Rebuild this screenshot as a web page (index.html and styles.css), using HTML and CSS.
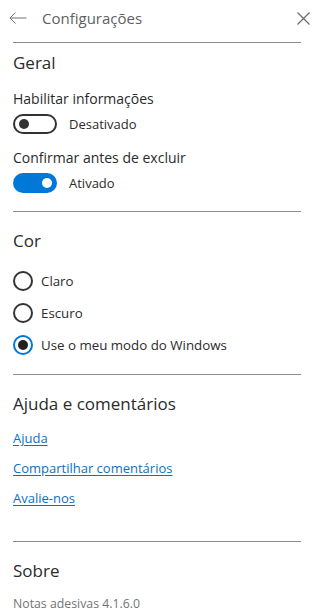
FILE: index.html
```html
<!DOCTYPE html>
<html lang="pt">
<head>
<meta charset="utf-8">
<title>Configurações</title>
<link rel="stylesheet" href="styles.css">
</head>
<body>
<div class="panel">
  <header class="header">
    <svg class="back" width="18" height="12" viewBox="0 0 18 12"><path d="M1 6H17.5M6.5 0.5L1 6l5.5 5.5" fill="none" stroke="#707070" stroke-width="1"/></svg>
    <span class="title">Configurações</span>
    <svg class="close" width="13" height="13" viewBox="0 0 13 13"><path d="M0.5 0.5l12 12M12.5 0.5l-12 12" fill="none" stroke="#6b6b6b" stroke-width="1.2"/></svg>
  </header>

  <section class="section first">
    <h2 class="heading">Geral</h2>
    <div class="label">Habilitar informações</div>
    <div class="toggle-row">
      <span class="toggle off"><span class="knob"></span></span>
      <span class="toggle-text">Desativado</span>
    </div>
    <div class="label second">Confirmar antes de excluir</div>
    <div class="toggle-row">
      <span class="toggle on"><span class="knob"></span></span>
      <span class="toggle-text">Ativado</span>
    </div>
  </section>

  <section class="section radios">
    <h2 class="heading">Cor</h2>
    <div class="radio-row"><span class="radio"></span><span>Claro</span></div>
    <div class="radio-row"><span class="radio"></span><span>Escuro</span></div>
    <div class="radio-row"><span class="radio checked"><span class="dot"></span></span><span>Use o meu modo do Windows</span></div>
  </section>

  <section class="section links">
    <h2 class="heading">Ajuda e comentários</h2>
    <a class="link" href="#">Ajuda</a>
    <a class="link" href="#">Compartilhar comentários</a>
    <a class="link" href="#">Avalie-nos</a>
  </section>

  <section class="section about">
    <h2 class="heading">Sobre</h2>
    <div class="version">Notas adesivas 4.1.6.0</div>
  </section>
</div>
</body>
</html>
```

FILE: styles.css
```css
html, body {
  margin: 0;
  padding: 0;
  background: #ffffff;
}
body {
  font-family: "Open Sans", "Noto Sans", sans-serif;
  font-size: 14px;
  color: #2b2b2b;
  width: 312px;
  height: 611px;
  overflow: hidden;
}
.panel {
  padding: 0 11px 0 13px;
}
.header {
  display: flex;
  align-items: center;
  height: 36px;
  padding-bottom: 6px;
  margin: 0 -9px 0 -4px;
}
.back {
  display: block;
  flex: none;
}
.title {
  margin-left: 15px;
  font-size: 15px;
  color: #5f5f5f;
  flex: 1;
}
.close {
  display: block;
  flex: none;
}
.section {
  border-top: 1px solid #8c8c8c;
  display: flex;
  flex-direction: column;
  align-items: flex-start;
}
.heading {
  margin: 15px 0 0;
  font-size: 17px;
  font-weight: 400;
  line-height: 28px;
  color: #2b2b2b;
}
.first .heading {
  margin-top: 6px;
}
.first {
  padding-bottom: 18px;
}
.label {
  line-height: 20px;
  margin-top: 12px;
}
.label.second {
  margin-top: 14px;
}
.toggle-row {
  display: flex;
  align-items: center;
  margin-top: 5px;
  height: 20px;
  font-size: 13px;
}
.toggle {
  box-sizing: border-box;
  width: 44px;
  height: 20px;
  border-radius: 10px;
  display: flex;
  align-items: center;
  padding: 0 4px;
}
.toggle.off {
  border: 2px solid #333333;
  justify-content: flex-start;
}
.toggle.on {
  background: #0078d7;
  justify-content: flex-end;
  padding: 0 5px;
}
.knob {
  width: 10px;
  height: 10px;
  border-radius: 50%;
}
.off .knob {
  background: #333333;
}
.on .knob {
  background: #ffffff;
}
.toggle-text {
  margin-left: 12px;
}
.radios {
  padding-bottom: 13px;
}
.radios .heading {
  margin-bottom: 10px;
}
.radio-row {
  display: flex;
  align-items: center;
  height: 32px;
  font-size: 13.3px;
}
.radio {
  box-sizing: border-box;
  width: 20px;
  height: 20px;
  border-radius: 50%;
  border: 2px solid #333333;
  margin-right: 8px;
  display: flex;
  align-items: center;
  justify-content: center;
}
.radio.checked {
  border-color: #0078d7;
}
.dot {
  width: 10px;
  height: 10px;
  border-radius: 50%;
  background: #222222;
}
.links {
  padding-bottom: 28px;
}
.links .heading {
  margin-bottom: 5px;
}
.link {
  line-height: 30px;
  font-size: 13px;
  color: #0a72c0;
  text-decoration: underline;
  text-underline-offset: 2px;
}
.about .heading {
  margin-top: 15px;
}
.version {
  margin-top: 12px;
  line-height: 14px;
  font-size: 12.3px;
  color: #747474;
}
```
